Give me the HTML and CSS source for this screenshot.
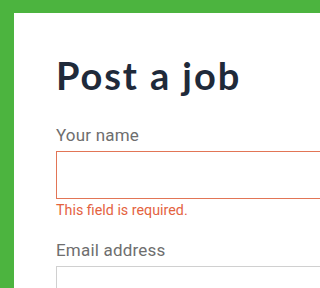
FILE: index.html
```html
<!DOCTYPE html>
<html>
<head>
<meta charset="utf-8">
<link rel="stylesheet" href="styles.css">
</head>
<body>
<main class="panel">
  <h1 class="title">Post a job</h1>
  <form class="form">
    <div class="field">
      <label class="label">Your name</label>
      <div class="input input-error"></div>
      <p class="error">This field is required.</p>
    </div>
    <div class="field">
      <label class="label">Email address</label>
      <div class="input"></div>
    </div>
  </form>
</main>
</body>
</html>
```
FILE: styles.css
```css
html, body {
  margin: 0;
  padding: 0;
  height: 100%;
  overflow: hidden;
}
body {
  background: #4cb43f;
  padding: 13px 0 0 14px;
  box-sizing: border-box;
}
.panel {
  background: #ffffff;
  height: 100%;
  overflow: hidden;
  padding: 39px 0 0 42px;
  box-sizing: border-box;
}
.title {
  margin: 0 0 27px 0;
  font-family: "Lato", sans-serif;
  font-weight: 700;
  font-size: 38px;
  line-height: 46px;
  letter-spacing: 1.9px;
  color: #1f2a3a;
  white-space: nowrap;
}
.form {
  margin: 0;
}
.field {
  display: flex;
  flex-direction: column;
}
.label {
  font-family: "Roboto", sans-serif;
  font-size: 17px;
  line-height: 20px;
  letter-spacing: 0.2px;
  color: #6e6e6e;
  margin-bottom: 6px;
  white-space: nowrap;
}
.input {
  width: 600px;
  flex-shrink: 0;
  height: 48px;
  box-sizing: border-box;
  border: 1px solid #d0d0d0;
  background: #fff;
}
.input-error {
  border-color: #e27556;
}
.error {
  margin: 2px 0 21px 0;
  font-family: "Roboto", sans-serif;
  font-size: 14.3px;
  line-height: 18px;
  color: #e4633f;
  white-space: nowrap;
}
```
